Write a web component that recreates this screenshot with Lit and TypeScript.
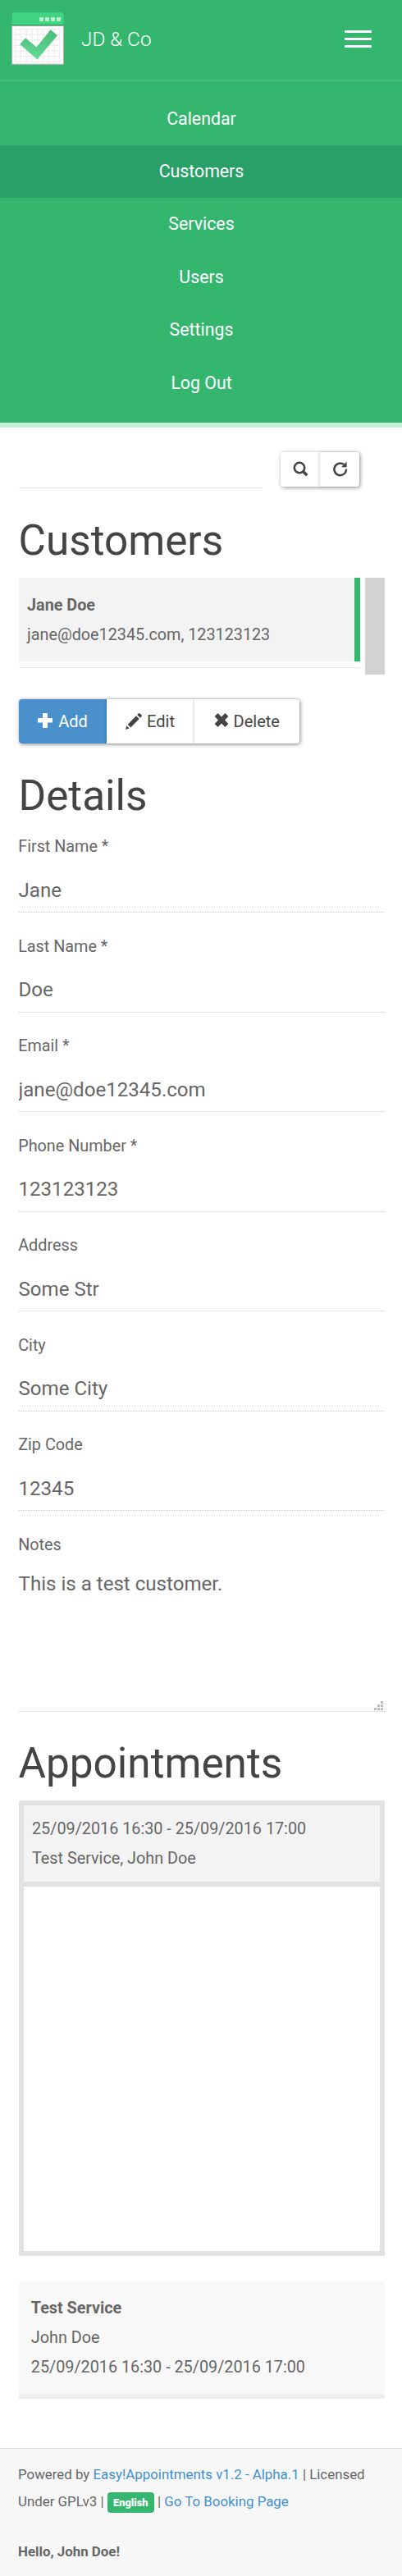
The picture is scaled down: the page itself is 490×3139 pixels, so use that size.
import { LitElement, html, css, svg } from "lit";
import { customElement } from "lit/decorators.js";
import { classMap } from "lit/directives/class-map.js";

const NAV = ["Calendar", "Customers", "Services", "Users", "Settings", "Log Out"];
const FIELDS = [
  ["First Name *", "Jane"],
  ["Last Name *", "Doe"],
  ["Email *", "jane@doe12345.com"],
  ["Phone Number *", "123123123"],
  ["Address", "Some Str"],
  ["City", "Some City"],
  ["Zip Code", "12345"],
];

const GRID = [0, 1, 2, 3, 4, 5, 6, 7, 8];

@customElement("app-root")
export class AppRoot extends LitElement {
  static styles = css`
    :host {
      display: block;
      height: 3139px;
      overflow: hidden;
      background: #fff;
      color: #666;
      font: 19.8px/36px Roboto, sans-serif;
    }
    * { box-sizing: border-box; }
    .header {
      background: #35b66f;
      border-bottom: 6px solid #c1f0d6;
      height: 521px;
    }
    .bar {
      height: 99px;
      border-bottom: 2px solid #49bd7d;
      display: flex;
      align-items: flex-start;
      padding: 15px 37px 0 14px;
      color: #fff;
    }
    .logo { display: block; }
    .brand { margin-left: 21px; font-size: 24.3px; font-weight: 300; line-height: 66px; flex: 1; }
    .burger { display: flex; flex-direction: column; gap: 6px; padding-top: 22px; }
    .line { width: 33px; height: 3px; border-radius: 1px; background: #fff; }
    .nav { padding-top: 13.6px; display: flex; flex-direction: column; }
    .nav-item {
      height: 64.4px;
      line-height: 64.6px;
      text-align: center;
      color: #fff;
      font-size: 21.3px;
      text-decoration: none;
      padding-left: 1px;
    }
    .active { background: #29a068; }
    .main { padding: 30px 21px 0 22.5px; height: 2462px; }
    .search { display: flex; height: 44px; align-items: flex-start; }
    .search-input {
      width: 297px; height: 44px; border: 0; border-bottom: 1px solid #ddd;
      margin-right: 22.5px; padding: 0; background: transparent; outline: none;
      font: inherit;
    }
    .group { display: inline-flex; border-radius: 4px; box-shadow: 1px 1px 5px rgba(0, 0, 0, 0.45); vertical-align: top; }
    .btn {
      display: flex; align-items: center; justify-content: center; border: 0; padding: 0;
      background: #fff; color: #444; font: 20px/54px Roboto, sans-serif;
    }
    .btn + .btn { box-shadow: -1px 0 3px rgba(0, 0, 0, 0.18); }
    .btn:first-child { border-radius: 4px 0 0 4px; }
    .btn:last-child { border-radius: 0 4px 4px 0; }
    .small { width: 48px; height: 42px; padding-bottom: 2px; }
    .large { height: 54px; gap: 6px; }
    .add { width: 107px; background: #4a90cb; color: #fff; }
    .edit { width: 107px; }
    .delete { width: 128.5px; }
    .title { margin: 0; color: #444; font-size: 51.3px; font-weight: 400; line-height: 56px; }
    .t-customers { margin-top: 36px; }
    .t-details { margin-top: 35.5px; }
    .t-appointments { margin-top: 35px; }
    .results { margin-top: 17px; display: flex; justify-content: space-between; height: 118px; }
    .list { width: 416.5px; }
    .customer { background: #f3f3f3; border-right: 7px solid #35b66f; padding: 16px 10.5px 14px; height: 102px; }
    .rule { margin-top: 7px; height: 1px; background: #e9e9e9; }
    .track { width: 24px; background: #d2d2d2; }
    .actions { margin-top: 30px; height: 54px; }
    .field { height: 121.5px; padding-top: 27.5px; }
    .form { margin-top: -7px; }
    .label { display: block; height: 40.5px; line-height: 28px; font-size: 19.8px; margin-left: -0.3px; }
    .input {
      display: block; width: 100%; height: 53.5px; border: 0; border-bottom: 1px dotted #ccc;
      padding: 0; background: transparent; color: #666; font: 24.1px/36px Roboto, sans-serif; outline: none;
    }
    .notes { height: 245px; padding-top: 28px; }
    .area-wrap { position: relative; height: 176.5px; }
    .area { height: 176.5px; resize: none; padding-top: 3px; overflow: hidden; line-height: 34px; }
    .grip { position: absolute; right: 2px; bottom: 2.5px; }
    .history { margin-top: 17px; height: 555px; border: 6px solid #e2e2e2; }
    .entry { height: 99px; background: #f3f3f3; border-bottom: 6px solid #e2e2e2; padding: 11px 10.500px 9px; }
    .card { margin-top: 30px; height: 144px; background: #f8f8f8; border-bottom: 6px solid #eee; padding: 16px 15px 14px 15.3px; }
    .footer {
      height: 156px; background: #f7f7f7; border-top: 1px solid #ddd; padding: 15px 22px 0;
      font-size: 16.87px; line-height: 33px;
    }
    .link { color: #428fce; text-decoration: none; }
    .lang {
      display: inline-block; width: 57px; height: 25px; line-height: 25px; border-radius: 4px;
      background: #35b66f; color: #fff; font-size: 12.75px; font-weight: 900; text-align: center;
    }
    .hello { margin-top: 28px; font-weight: 700; }
  `;

  private logo() {
    return svg`<svg class="logo" width="64" height="64" viewBox="0 0 64 64">
      <defs>
        <linearGradient id="tick" x1="0" y1="0" x2="0" y2="1">
          <stop offset="0" stop-color="#4aba77"/><stop offset="1" stop-color="#63dc98"/>
        </linearGradient>
      </defs>
      <path d="M.7 16V2.5Q.7 .3 3 .3H61Q63.5 .3 63.5 2.5V16Z" fill="#3ed681"/>
      <rect x="34" y="6" width="5" height="5" fill="#b9f0d2"/><rect x="41" y="6" width="5" height="5" fill="#b9f0d2"/>
      <rect x="48" y="6" width="5" height="5" fill="#b9f0d2"/><rect x="55" y="6" width="5" height="5" fill="#b9f0d2"/>
      <rect x="0" y="15" width="64" height="1.2" fill="#2a9a5f"/>
      <rect x="0" y="16.2" width="64" height="47.8" fill="#b5b5b5"/>
      <rect x="1.2" y="17" width="61.6" height="45.6" fill="#fff"/>
      ${GRID.map((i) => svg`<rect x=${4 + i * 6.8} y="20" width="1.2" height="41" fill="#ececec"/>`)}
      ${GRID.slice(0, 7).map((i) => svg`<rect x="4" y=${20 + i * 6.6} width="55.6" height="1.2" fill="#ececec"/>`)}
      <path d="M10.3 39L17 31.2L30.5 42.4L47.7 21.2L56 28.2L31.3 57.6Z" fill="url(#tick)"/>
    </svg>`;
  }

  render() {
    return html`
      <header class="header">
        <div class="bar">
          ${this.logo()}
          <div class="brand">JD &amp; Co</div>
          <div class="burger"><div class="line"></div><div class="line"></div><div class="line"></div></div>
        </div>
        <nav class="nav">
          ${NAV.map((n) => html`<a class=${classMap({ "nav-item": true, active: n === "Customers" })}>${n}</a>`)}
        </nav>
      </header>
      <main class="main">
        <div class="search">
          <input class="search-input" />
          <div class="group">
            <button class="btn small" aria-label="Search">
              <svg width="19" height="19" viewBox="0 0 19 19" fill="none" stroke="currentColor">
                <circle cx="8" cy="8" r="6.2" stroke-width="2.6"/><path d="M12 12L17.3 17.3" stroke-width="3.4"/>
              </svg>
            </button>
            <button class="btn small" aria-label="Clear">
              <svg width="19" height="19" viewBox="0 0 19 19">
                <path d="M14.2 4.1A7.3 7.3 0 1 0 17 9.6" fill="none" stroke="currentColor" stroke-width="2.5"/>
                <path d="M17.6 .6V7.2H11Z" fill="currentColor"/>
              </svg>
            </button>
          </div>
        </div>
        <h2 class="title t-customers">Customers</h2>
        <div class="results">
          <div class="list">
            <div class="customer"><b>Jane Doe</b><div>jane@doe12345.com, 123123123</div></div>
            <div class="rule"></div>
          </div>
          <div class="track"></div>
        </div>
        <div class="actions">
          <div class="group">
            <button class="btn large add">
              <svg width="20" height="20" viewBox="0 0 20 20"><path d="M7 0h6v6h6v5.500H13V18H7v-6.500H1V6H7Z" fill="currentColor"/></svg>Add
            </button>
            <button class="btn large edit">
              <svg width="20" height="24" viewBox="0 0 20 24"><path d="M0 22L1.300 17.200L4.700 20.600ZM2.700 15.700L13 5.300L16.700 9L6.300 19.400ZM14.200 4.100L16 2.300Q16.700 1.600 17.500 2.400L19.700 4.600Q20.300 5.300 19.600 6L17.900 7.800Z" fill="currentColor"/></svg>Edit
            </button>
            <button class="btn large delete">
              <svg width="18" height="22" viewBox="0 0 18 22"><path d="M4.500 1.100L9 5.600L13.500 1.100L17.400 5L12.900 9.500L17.400 14L13.500 17.900L9 13.400L4.500 17.900L.6 14L5.100 9.500L.6 5Z" fill="currentColor"/></svg>Delete
            </button>
          </div>
        </div>
        <h2 class="title t-details">Details</h2>
        <div class="form">
          ${FIELDS.map(([l, v]) => html`<div class="field"><label class="label">${l}</label><input class="input" .value=${v} /></div>`)}
          <div class="notes">
            <label class="label">Notes</label>
            <div class="area-wrap">
              <textarea class="input area" .value=${"This is a test customer."}></textarea>
              <svg class="grip" width="11" height="11" viewBox="0 0 11 11" fill="#bdbdbd">
                <path d="M8 0h3v3H8ZM4 4h3v3H4ZM8 4h3v3H8ZM0 8h3v3H0ZM4 8h3v3H4ZM8 8h3v3H8Z"/>
              </svg>
            </div>
          </div>
        </div>
        <h2 class="title t-appointments">Appointments</h2>
        <div class="history">
          <div class="entry"><div>25/09/2016 16:30 - 25/09/2016 17:00</div><div>Test Service, John Doe</div></div>
        </div>
        <div class="card"><b>Test Service</b><div>John Doe</div><div>25/09/2016 16:30 - 25/09/2016 17:00</div></div>
      </main>
      <footer class="footer">
        <div>Powered by <a class="link">Easy!Appointments v1.2 - Alpha.1</a> | Licensed<br />Under GPLv3 |
          <span class="lang">English</span> | <a class="link">Go To Booking Page</a></div>
        <div class="hello">Hello, John Doe!</div>
      </footer>
    `;
  }
}
